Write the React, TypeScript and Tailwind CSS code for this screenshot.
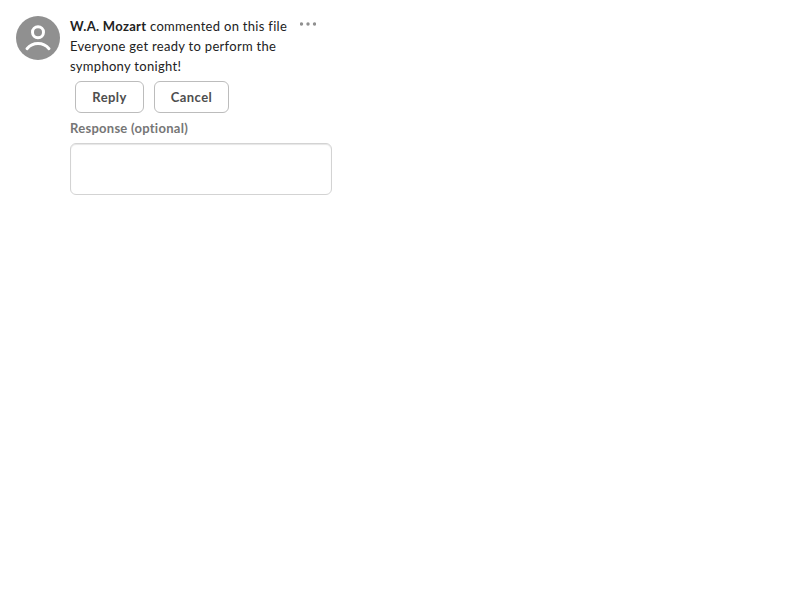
export default function App() {
  return (
    <div className="flex p-4 font-[Lato,sans-serif] text-[13px] leading-5 tracking-[0.3px] text-[#222] antialiased">
      <svg className="mr-2.5 size-11 shrink-0" viewBox="0 0 32 32" aria-hidden="true">
        <circle cx="16" cy="16" r="16" fill="#909090" />
        <g fill="none" stroke="#fff" strokeWidth="2.15" strokeLinecap="round">
          <circle cx="16" cy="11.85" r="4" />
          <path d="M8 23.8a10.4 10.4 0 0 1 16 0" />
        </g>
      </svg>
      <div className="flex w-[262px] flex-col">
        <div className="flex">
          <div className="w-[230px]">
            <div className="whitespace-nowrap">
              <b>W.A. Mozart</b> commented on this file
            </div>
            <div>Everyone get ready to perform the symphony tonight!</div>
          </div>
          <svg className="h-4 w-4 shrink-0" viewBox="0 0 16 16" fill="#909090" aria-hidden="true">
            <circle cx="1.5" cy="8" r="1.7" />
            <circle cx="8" cy="8" r="1.7" />
            <circle cx="14.5" cy="8" r="1.7" />
          </svg>
        </div>
        <div className="mt-[5px] flex gap-2.5 pl-[5px]">
          <button className="h-8 w-[69px] rounded-md border border-[#bcbcbc] bg-white font-bold tracking-[0.4px] text-[#4e4e4e]">Reply</button>
          <button className="h-8 w-[75px] rounded-md border border-[#bcbcbc] bg-white font-bold tracking-[0.4px] text-[#4e4e4e]">Cancel</button>
        </div>
        <label className="mt-[5px] font-bold tracking-[0.27px] text-[#767676]" htmlFor="response">Response (optional)</label>
        <textarea
          id="response"
          className="mt-[5px] h-[52px] w-full resize-none rounded-md border border-[#d3d3d3] shadow-[inset_0_1px_1px_rgba(0,0,0,0.1)]"
        />
      </div>
    </div>
  );
}
